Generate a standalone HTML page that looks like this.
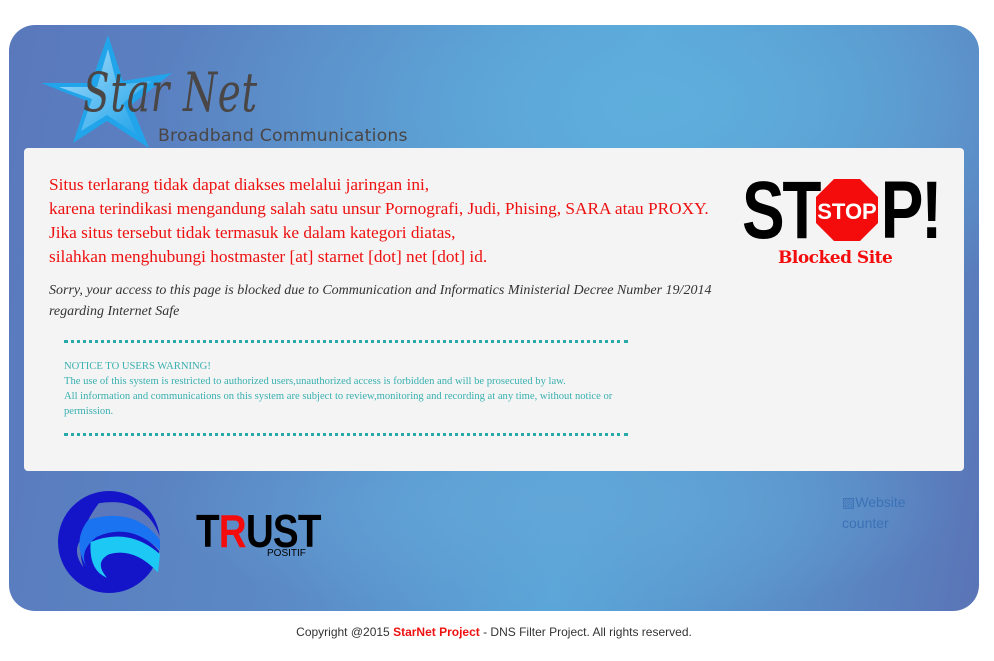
<!DOCTYPE html>
<html><head><meta charset="utf-8"><style>
body{margin:0;background:#fff;width:994px;height:661px;position:relative;font-family:"Liberation Serif",serif;overflow:hidden}
.wrap{position:absolute;left:9px;top:25px;width:970px;height:586px;border-radius:26px;overflow:hidden;
background:radial-gradient(ellipse 500px 220px at 650px 80px,#5eaedc 0%,rgba(94,174,220,0) 100%),
radial-gradient(ellipse 400px 120px at 550px 480px,#62a6d8 0%,rgba(98,166,216,0) 100%),
linear-gradient(100deg,#5a78bc 0%,#5b8ac6 35%,#5aa6d8 60%,#5a90c8 80%,#5a74b6 100%)}
.panel{position:absolute;left:15px;top:123px;width:940px;height:323px;background:#f4f4f4;border-radius:4px}
.red{position:absolute;left:25px;top:25px;color:#ee1111;font-size:17.3px;line-height:24px;white-space:nowrap}
.it{position:absolute;left:25px;top:132px;font-style:italic;font-size:14px;line-height:21px;color:#333}
.dots{position:absolute;left:40px;width:564px;border-top:3px dotted #2aa9a9}
.notice{position:absolute;left:40px;top:211px;color:#39b0b0;font-size:10.6px;line-height:15px;width:560px}
</style></head><body>
<div class="wrap">
<svg style="position:absolute;left:28px;top:8px" width="140" height="118" viewBox="0 0 140 118">
<defs><linearGradient id="g" x1="0" y1="0" x2="1" y2="1"><stop offset="0" stop-color="#c8ecff"/><stop offset="1" stop-color="#1aa0e8"/></linearGradient></defs>
<polygon points="71,2 86,48 135,40 94,72 112,115 70,88 36,110 50,68 4,50 54,50" fill="#22a4ea"/>
<polygon points="71,16 80,52 115,48 86,70 100,102 70,82 44,98 55,66 22,54 60,54" fill="url(#g)" opacity=".8"/>
</svg>
<div style="position:absolute;left:74px;top:36px;font-family:'DejaVu Serif',serif;font-style:italic;font-size:54px;color:#4a4646;letter-spacing:1px;transform:scaleX(.72);transform-origin:left">Star Net</div>
<div style="position:absolute;left:149px;top:101px;font-family:'DejaVu Sans',sans-serif;font-size:17.3px;color:#4a4646;letter-spacing:.2px">Broadband Communications</div>
<div class="panel">
<div class="red">Situs terlarang tidak dapat diakses melalui jaringan ini,<br>karena terindikasi mengandung salah satu unsur Pornografi, Judi, Phising, SARA atau PROXY.<br>Jika situs tersebut tidak termasuk ke dalam kategori diatas,<br>silahkan menghubungi hostmaster [at] starnet [dot] net [dot] id.</div>
<div class="it">Sorry, your access to this page is blocked due to Communication and Informatics Ministerial Decree Number 19/2014<br>regarding Internet Safe</div>
<div class="dots" style="top:192px"></div>
<div class="notice">NOTICE TO USERS WARNING!<br>The use of this system is restricted to authorized users,unauthorized access is forbidden and will be prosecuted by law.<br>All information and communications on this system are subject to review,monitoring and recording at any time, without notice or permission.</div>
<div class="dots" style="top:285px"></div>
<div style="position:absolute;left:718px;top:22px;width:200px;height:100px">
<div style="position:absolute;left:0;top:0;font-family:'Liberation Sans',sans-serif;font-weight:bold;font-size:82px;line-height:82px;color:#000;letter-spacing:-3px;transform:scaleX(.78);transform-origin:left">ST&nbsp;&nbsp;&nbsp;&nbsp;P!</div>
<svg style="position:absolute;left:73px;top:8px" width="64" height="64" viewBox="0 0 64 64"><polygon points="19,1 45,1 63,19 63,45 45,63 19,63 1,45 1,19" fill="#f40c0c"/><text x="32" y="41" text-anchor="middle" font-family="Liberation Sans" font-weight="bold" font-size="22" fill="#fff">STOP</text></svg>
<div style="position:absolute;left:36px;top:78px;font-family:'DejaVu Serif',serif;font-weight:bold;font-size:17px;color:#f40c0c;letter-spacing:-.5px">Blocked Site</div>
</div>
</div>
<svg style="position:absolute;left:49px;top:466px" width="102" height="102" viewBox="0 0 100 100">
<circle cx="50" cy="50" r="50" fill="#1414c8"/>
<path d="M40 12 Q85 5 100 45 L100 60 Q70 25 30 40 Q10 55 25 75 Q15 45 40 12Z" fill="#5b78bc"/>
<path d="M30 28 Q75 15 100 48 L100 58 Q70 30 38 45 Q18 60 30 78 Q12 50 30 28Z" fill="#1a73f0"/>
<path d="M32 50 Q70 35 100 62 L98 80 Q75 55 50 62 Q35 70 48 85 Q30 78 32 50Z" fill="#1ec8f4"/>
<path d="M48 75 Q60 68 70 80 Q68 92 55 90 Q62 85 56 80 Q50 80 48 75Z" fill="#1414c8"/>
</svg>
<div style="position:absolute;left:187px;top:483px;font-family:'Liberation Sans',sans-serif;font-weight:bold;font-size:46px;line-height:46px;letter-spacing:-1px;transform:scaleX(.84);transform-origin:left;color:#000">T<span style="color:#f40c0c">R</span>UST</div>
<div style="position:absolute;left:258px;top:523px;font-family:'Liberation Sans',sans-serif;font-size:10px;color:#000">POSITIF</div>
<div style="position:absolute;left:833px;top:467px;font-family:'Liberation Sans',sans-serif;font-size:14px;line-height:21px;color:#3a72b6;width:80px">▨Website counter</div>
</div>
<div style="position:absolute;left:0;width:988px;top:625px;text-align:center;font-family:'Liberation Sans',sans-serif;font-size:12px;color:#333">Copyright @2015 <b style="color:#ee1111">StarNet Project</b> - DNS Filter Project. All rights reserved.</div>
</body></html>
